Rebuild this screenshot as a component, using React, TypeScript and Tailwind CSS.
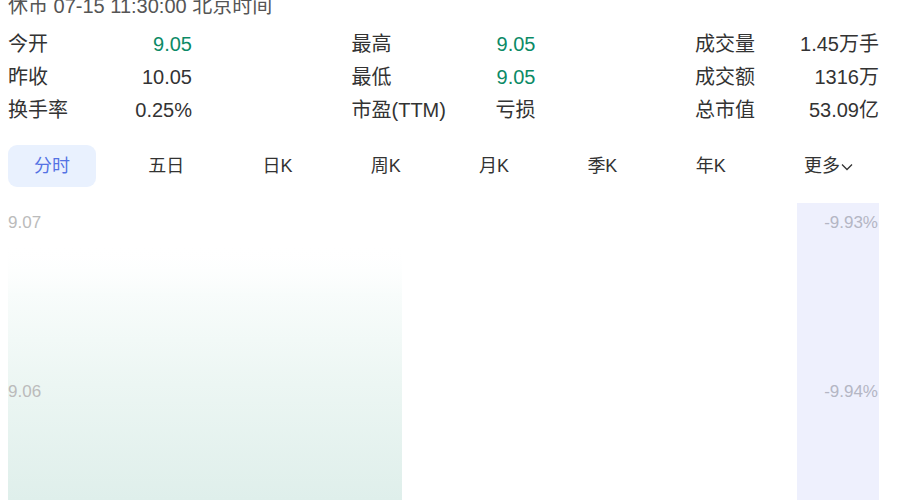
import React from "react";

const green = "text-[#0b8a66]";

type Cell = { label: string; value: string; color?: string };

const columns: Cell[][] = [
  [
    { label: "今开", value: "9.05", color: green },
    { label: "昨收", value: "10.05" },
    { label: "换手率", value: "0.25%" },
  ],
  [
    { label: "最高", value: "9.05", color: green },
    { label: "最低", value: "9.05", color: green },
    { label: "市盈(TTM)", value: "亏损" },
  ],
  [
    { label: "成交量", value: "1.45万手" },
    { label: "成交额", value: "1316万" },
    { label: "总市值", value: "53.09亿" },
  ],
];

const tabs = ["分时", "五日", "日K", "周K", "月K", "季K", "年K"];

export default function App() {
  return (
    <div
      className="w-[900px] h-[500px] overflow-hidden bg-white px-2 text-[#333]"
      style={{ fontFamily: '"Liberation Sans", "Noto Sans CJK SC", Arial, sans-serif' }}
    >
      <div className="-mt-[10px] h-[33px] text-[20px] leading-[33px] text-[#555]">
        休市 07-15 11:30:00 北京时间
      </div>

      <div className="mt-[5px] flex justify-between pr-[13px]">
        {columns.map((col, i) => (
          <div key={i} className="w-[184px] flex flex-col">
            {col.map((c) => (
              <div key={c.label} className="flex justify-between h-[33px] text-[20px] leading-[33px]">
                <span>{c.label}</span>
                <span className={c.color ?? "text-[#333]"}>{c.value}</span>
              </div>
            ))}
          </div>
        ))}
      </div>

      <div className="mt-[18px] flex justify-between pr-[13px]">
        {tabs.map((t, i) => (
          <div
            key={t}
            className={
              "h-[42px] px-[26px] flex items-center rounded-[9px] text-[18px] " +
              (i === 0 ? "bg-[#e9f1fe] text-[#5472e4]" : "text-[#333]")
            }
          >
            {t}
          </div>
        ))}
        <div className="h-[42px] px-[26px] flex items-center text-[18px] text-[#333]">
          更多
          <svg width="12" height="8" viewBox="0 0 12 8" className="ml-[1px] mt-[2px]">
            <polyline points="1,1.5 6,6.5 11,1.5" fill="none" stroke="#333" strokeWidth="1.3" />
          </svg>
        </div>
      </div>

      <div className="relative mt-[16px] h-[297px] flex pr-[13px]">
        <div className="flex-1 relative">
          <svg className="absolute left-0 top-0" width="394" height="297" viewBox="0 0 394 297">
            <defs>
              <linearGradient id="areaFill" x1="0" y1="0" x2="0" y2="1">
                <stop offset="0" stopColor="#ffffff" stopOpacity="0" />
                <stop offset="0.2" stopColor="#f8fcfb" />
                <stop offset="0.55" stopColor="#ecf6f3" />
                <stop offset="1" stopColor="#dfefeb" />
              </linearGradient>
            </defs>
            <rect x="0" y="40" width="394" height="257" fill="url(#areaFill)" />
          </svg>
        </div>
        <div className="w-[82px] bg-[#eef0fd]" />

        <span className="absolute left-0 top-[10px] text-[17px] leading-[20px] text-[#bbbbbb]">9.07</span>
        <span className="absolute left-0 top-[179px] text-[17px] leading-[20px] text-[#bbbbbb]">9.06</span>
        <span className="absolute right-[14px] top-[10px] text-[17px] leading-[20px] text-[#b4b6c4]">-9.93%</span>
        <span className="absolute right-[14px] top-[179px] text-[17px] leading-[20px] text-[#b4b6c4]">-9.94%</span>
      </div>
    </div>
  );
}
